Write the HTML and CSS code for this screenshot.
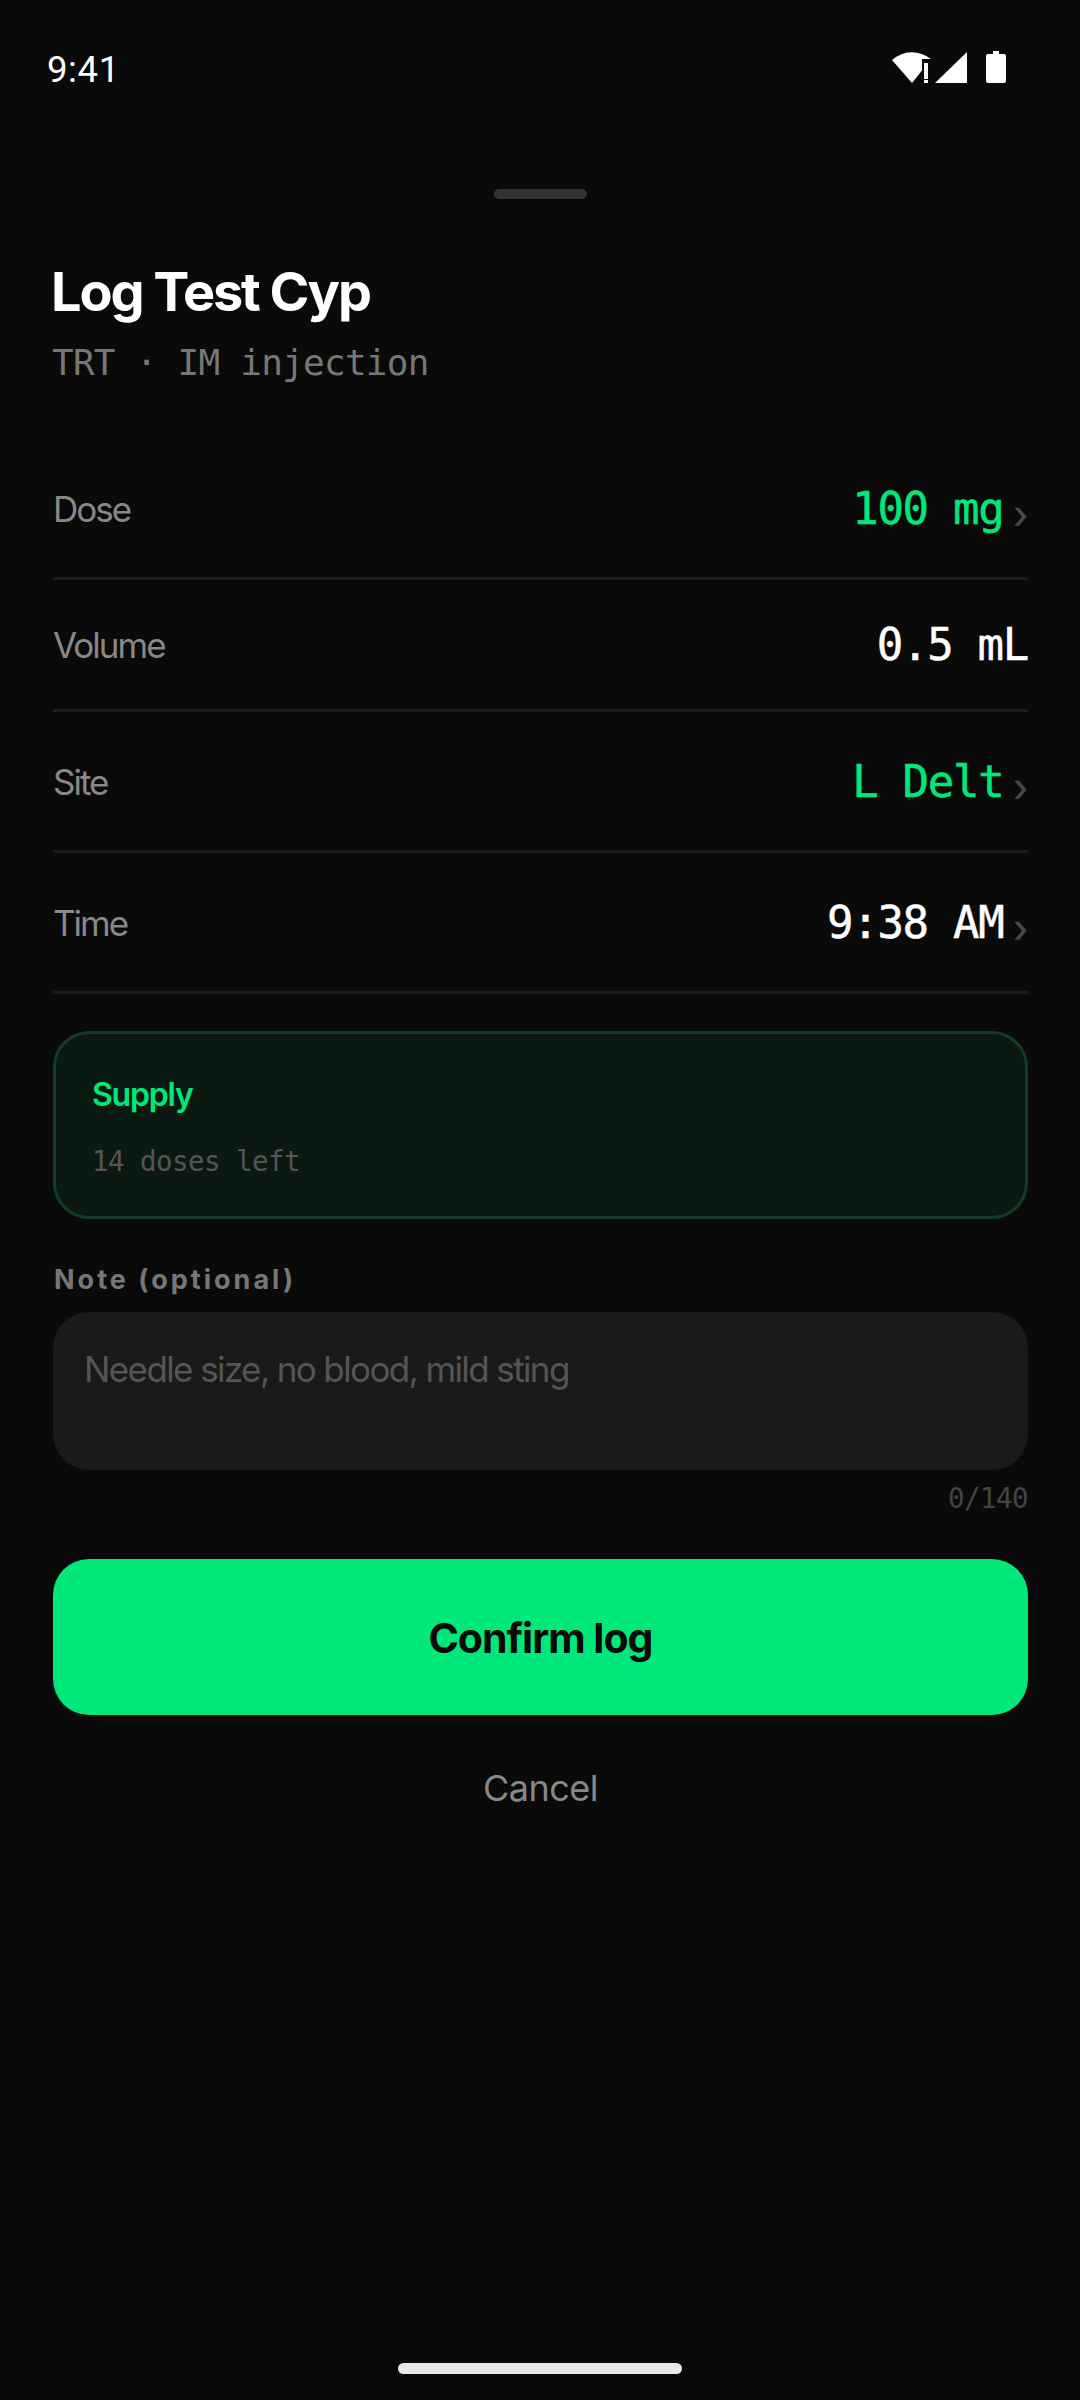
FILE: index.html
```html
<!DOCTYPE html>
<html>
	<head>
		<meta charset="UTF-8">
		<title>Log Test Cyp</title>
		<link rel="stylesheet" href="styles.css">
	</head>
	<body>
		<div class="screen">
			<div class="status-bar">
				<span class="clock">9:41</span>
				<svg class="status-icons" width="122" height="38" viewBox="0 0 122 38">
					<path d="M4 12A30 30 0 0 1 43 11H34V22.4L24 35Z" fill="#fff"/>
					<rect x="36" y="15" width="4" height="16" fill="#fff"/>
					<rect x="36" y="32" width="4" height="3" fill="#fff"/>
					<path d="M47 35L79 4V35Z" fill="#fff"/>
					<path d="M105 3H111V6H116A2 2 0 0 1 118 8V33A2 2 0 0 1 116 35H100A2 2 0 0 1 98 33V8A2 2 0 0 1 100 6H105Z" fill="#fff"/>
				</svg>
			</div>

			<div class="handle"></div>

			<div class="header">
				<h1 class="title">Log Test Cyp</h1>
				<p class="subtitle">TRT · IM injection</p>
			</div>

			<div class="rows">
				<div class="row tappable">
					<span class="row-label">Dose</span>
					<span class="row-value green">100 mg<i class="chevron">›</i></span>
				</div>
				<div class="row">
					<span class="row-label">Volume</span>
					<span class="row-value">0.5 mL</span>
				</div>
				<div class="row tappable">
					<span class="row-label">Site</span>
					<span class="row-value green">L Delt<i class="chevron">›</i></span>
				</div>
				<div class="row tappable">
					<span class="row-label">Time</span>
					<span class="row-value">9:38 AM<i class="chevron">›</i></span>
				</div>
			</div>

			<div class="supply">
				<div class="supply-title">Supply</div>
				<div class="supply-text">14 doses left</div>
			</div>

			<div class="note-label">Note (optional)</div>
			<div class="note-box">Needle size, no blood, mild sting</div>
			<div class="note-count">0/140</div>

			<button class="confirm">Confirm log</button>
			<button class="cancel">Cancel</button>

			<div class="home-bar"></div>
		</div>
	</body>
</html>
```

FILE: styles.css
```css
* {margin: 0; padding: 0; border: none; box-sizing: border-box;}
body {
	background: #0a0a0a;
	font-family: Inter, "Liberation Sans", sans-serif;
}
.screen {
	width: 1080px;
	height: 2400px;
	padding: 0 52px 0 53px;
	position: relative;
	overflow: hidden;
}

/* status bar */
.status-bar {
	height: 136px;
	margin: 0 18px 0 -6px;
	display: flex;
	justify-content: space-between;
	align-items: center;
}
.clock {
	font: 400 36.5px Roboto, sans-serif;
	letter-spacing: 0.6px;
	color: #fff;
	margin-top: 3px;
}
.status-icons {
	margin-bottom: 3px;
}

.handle {
	width: 93px;
	height: 10px;
	margin: 53px 0 0 441px;
	border-radius: 5px;
	background: #333;
}

/* header */
.header {
	height: 240px;
	padding-top: 61px;
}
.title {
	margin-left: -2px;
	font-size: 54px;
	line-height: 64px;
	font-weight: 700;
	letter-spacing: -2.1px;
	color: #fff;
}
.subtitle {
	margin: 17px 0 0 -1px;
	font: 400 36px/44px "DejaVu Sans Mono", monospace;
	letter-spacing: -0.75px;
	color: #777;
}

/* rows */
.row {
	display: flex;
	justify-content: space-between;
	align-items: center;
	padding: 38px 0;
	border-bottom: 3px solid #1c1c1c;
}
.row.tappable {
	padding: 42.5px 0 40.5px;
}
.row-label {
	font-size: 35px;
	letter-spacing: -2px;
	color: #888;
}
.row-value {
	display: flex;
	align-items: baseline;
	font: 400 44px/53px "DejaVu Sans Mono", monospace;
	letter-spacing: -1.3px;
	-webkit-text-stroke: 0.5px currentColor;
	color: #fff;
}
.green {
	color: #00e87a;
}
.chevron {
	position: relative;
	top: 4px;
	margin-left: 10px;
	font: 400 38px/53px Inter, sans-serif;
	letter-spacing: 0;
	-webkit-text-stroke: 0.4px #4a4a4a;
	color: #4a4a4a;
}

/* supply card */
.supply {
	height: 188px;
	margin-top: 37px;
	padding: 41px 36px 0;
	border: 3px solid #0f3d26;
	border-radius: 36px;
	background: #0a1a13;
}
.supply-title {
	font-size: 32px;
	line-height: 40px;
	font-weight: 600;
	letter-spacing: -1.2px;
	color: #00e87a;
}
.supply-text {
	margin-top: 28px;
	font: 400 27.5px/36px "DejaVu Sans Mono", monospace;
	letter-spacing: -0.55px;
	color: #555;
}

/* note */
.note-label {
	margin: 45px 0 0 1px;
	font-size: 27px;
	line-height: 32px;
	font-weight: 700;
	letter-spacing: 3px;
	color: #777;
}
.note-box {
	height: 158px;
	margin-top: 16px;
	padding: 35px 31px 0;
	border-radius: 36px;
	background: #1a1a1a;
	font-size: 35px;
	line-height: 44px;
	letter-spacing: -1.6px;
	color: #555;
}
.note-count {
	margin-top: 12px;
	text-align: right;
	font: 400 27.5px/32px "DejaVu Sans Mono", monospace;
	letter-spacing: -0.55px;
	color: #444;
}

/* buttons */
.confirm {
	display: block;
	width: 100%;
	height: 156px;
	margin-top: 45px;
	padding-top: 2px;
	border-radius: 36px;
	background: #00e87a;
	font-family: Inter, sans-serif;
	font-size: 41px;
	font-weight: 700;
	letter-spacing: -1px;
	color: #0a0a0a;
}
.cancel {
	display: block;
	width: 100%;
	height: 48px;
	margin-top: 49px;
	background: none;
	font-family: Inter, sans-serif;
	font-size: 36px;
	letter-spacing: -0.5px;
	color: #888;
}

.home-bar {
	position: absolute;
	left: 398px;
	bottom: 26px;
	width: 284px;
	height: 11px;
	border-radius: 6px;
	background: #e8e8e8;
}
```
